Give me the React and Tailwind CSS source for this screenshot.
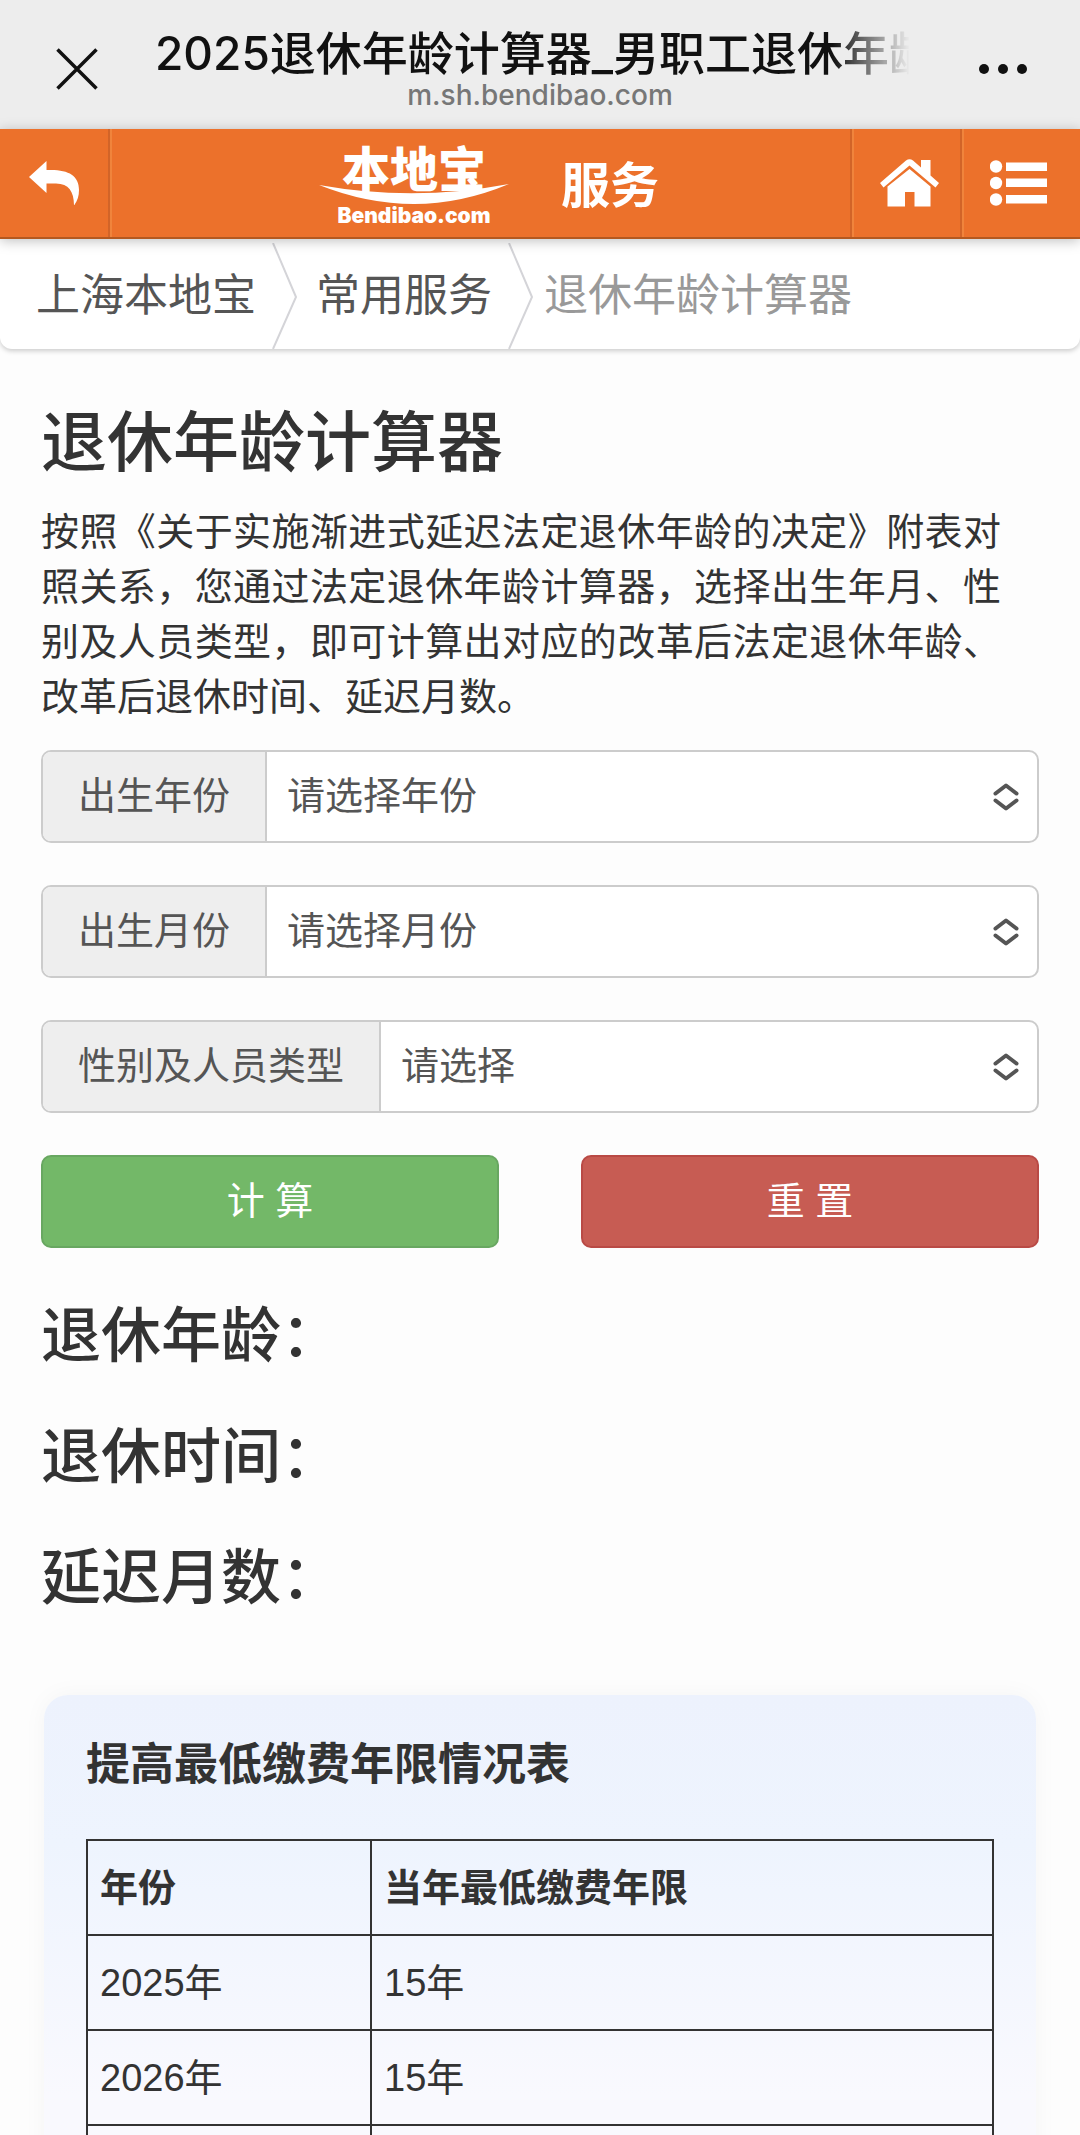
import React, { useState } from 'react';

const years = Array.from({ length: 61 }, (_, i) => 1950 + i);
const months = Array.from({ length: 12 }, (_, i) => i + 1);

const rows = [
  { year: '2025年', limit: '15年' },
  { year: '2026年', limit: '15年' },
  { year: '2027年', limit: '15年' },
];

const BackIcon = () => (
  <svg viewBox="0 0 50 44" className="w-[50px] h-[44px]" fill="currentColor" aria-hidden="true">
    <path d="M0 16 17.500 0V9H22C40 9 50 15 50 29c0 6-1.500 11-5 15.500C45 31 40 22.500 27 22.500h-9.500V32z" />
  </svg>
);

const HomeIcon = () => (
  <svg viewBox="0 0 59 48" className="w-[59px] h-[48px]" fill="currentColor" aria-hidden="true">
    <path d="M0 24 26 1.500q3.500-2.500 7 0l8 7V1h9.500v15.500L59 24l-3.500 4.500-26-22-26 22z" />
    <path d="m29.500 10 21 17.500v20H34.500V33h-9.500v14.500H7.500v-20z" />
  </svg>
);

const ListIcon = () => (
  <svg viewBox="0 0 57 46" className="w-[57px] h-[46px]" fill="currentColor" aria-hidden="true">
    <circle cx="6" cy="6.500" r="6.200" />
    <circle cx="6" cy="23" r="6.200" />
    <circle cx="6" cy="39.500" r="6.200" />
    <path d="M16 2.500h41v8.500H16zM16 18.500h41V27H16zM16 35h41v8.500H16z" />
  </svg>
);

const Sorter = () => (
  <svg
    viewBox="0 0 26 28"
    className="absolute right-[18px] top-1/2 -translate-y-1/2 w-[26px] h-[28px] pointer-events-none"
    fill="none"
    stroke="#555"
    strokeWidth="4"
    strokeLinecap="round"
    strokeLinejoin="round"
    aria-hidden="true"
  >
    <path d="M2.500 10.500 13 2.500l10.500 8M2.500 17.500l10.500 8 10.500-8" />
  </svg>
);

const CrumbArrow = () => (
  <svg viewBox="0 0 26 106" className="w-[26px] h-[106px]" fill="none" stroke="#d4d4d8" strokeWidth="2" aria-hidden="true">
    <path d="M1 0l23 54L1 106" />
  </svg>
);

const Field = ({ id, label, placeholder, value, onChange, children }) => (
  <div className="flex h-[93px] border-2 border-[#ccc] rounded-[10px] overflow-hidden bg-white text-[38px] text-[#555]">
    <label htmlFor={id} className="flex items-center shrink-0 px-[35px] bg-[#eee] border-r-2 border-[#ccc]">
      {label}
    </label>
    <div className="relative flex-1">
      <select
        id={id}
        value={value}
        onChange={(e) => onChange(e.target.value)}
        className="w-full h-full pl-[20px] pr-16 appearance-none bg-transparent outline-none"
      >
        <option value="">{placeholder}</option>
        {children}
      </select>
      <Sorter />
    </div>
  </div>
);

const App = () => {
  const [year, setYear] = useState('');
  const [month, setMonth] = useState('');
  const [type, setType] = useState('');

  const reset = () => {
    setYear('');
    setMonth('');
    setType('');
  };

  return (
    <div className="h-screen flex flex-col bg-[#fdfdfd] text-[#333] font-['Liberation_Sans','Noto_Sans_CJK_SC',sans-serif]">
      {/* WebView title bar */}
      <div className="h-[129px] shrink-0 flex items-center justify-between px-[52px] pt-[9px] bg-[#ededed] text-[#111] font-['Inter','Noto_Sans_CJK_SC',sans-serif]">
        <button aria-label="关闭" className="w-[50px] flex justify-center">
          <svg viewBox="0 0 42 42" className="w-[42px] h-[42px]" stroke="currentColor" strokeWidth="3.5" aria-hidden="true">
            <path d="M1.500 1.500l39 39M40.500 1.500l-39 39" />
          </svg>
        </button>
        <div className="w-[770px] pb-[4px]">
          <div className="overflow-hidden whitespace-nowrap text-[46px] leading-[56px] font-medium [mask-image:linear-gradient(to_right,#000_88%,transparent_98%)]">
            2025退休年龄计算器_男职工退休年龄
          </div>
          <div className="text-center text-[28px] leading-[28px] font-medium text-[#777]">m.sh.bendibao.com</div>
        </div>
        <button aria-label="更多" className="w-[50px] flex justify-center">
          <svg viewBox="0 0 50 12" className="w-[50px] h-[12px]" fill="currentColor" aria-hidden="true">
            <circle cx="6" cy="6" r="5" />
            <circle cx="25" cy="6" r="5" />
            <circle cx="44" cy="6" r="5" />
          </svg>
        </button>
      </div>

      {/* Site header */}
      <header className="relative z-10 h-[110px] shrink-0 flex bg-[#ec712b] text-white border-b-2 border-[#b4581f] shadow-[0_2px_12px_rgba(0,0,0,0.25)]">
        <button aria-label="返回" className="w-[110px] flex items-center justify-center border-r-2 border-[#d26428]">
          <BackIcon />
        </button>
        <div className="flex-1 flex items-center justify-center gap-[52px] pt-[6px] pl-[16px] border-l-2 border-[#f0843c]">
          <a href="#" className="w-[190px] flex flex-col items-center">
            <span className="text-[48px] leading-[44px] font-black font-['Noto_Sans_CJK_SC',sans-serif]">本地宝</span>
            <svg viewBox="0 0 190 20" className="w-full h-[20px] -mt-1" fill="currentColor" aria-hidden="true">
              <path d="M0 1Q95 18 190 0Q142 20 95 20Q48 20 0 1z" />
            </svg>
            <span className="text-[21px] leading-[24px] font-black font-['Inter',sans-serif]">Bendibao.com</span>
          </a>
          <span className="text-[49px] leading-[60px] font-bold">服务</span>
        </div>
        <a href="#" aria-label="首页" className="w-[110px] pl-[6px] flex items-center justify-center border-l-2 border-[#d26428] shadow-[inset_2px_0_0_#f0843c]">
          <HomeIcon />
        </a>
        <button aria-label="菜单" className="w-[120px] pr-[6px] flex items-center justify-center border-l-2 border-[#d26428] shadow-[inset_2px_0_0_#f0843c]">
          <ListIcon />
        </button>
      </header>

      <div className="flex-1 overflow-y-auto [scrollbar-width:none]">
        <nav className="h-[110px] flex items-center pt-[4px] pl-[36px] bg-white rounded-b-[12px] shadow-[0_2px_5px_rgba(0,0,0,0.2)] text-[44px] leading-[60px] whitespace-nowrap text-[#555]">
          <a href="#" className="pr-[16px]">上海本地宝</a>
          <CrumbArrow />
          <a href="#" className="pl-[18px] pr-[16px]">常用服务</a>
          <CrumbArrow />
          <span className="pl-[10px] text-[#999]">退休年龄计算器</span>
        </nav>

        <main className="px-[41px]">
          <h1 className="mt-[54px] text-[66px] leading-[80px] font-medium">退休年龄计算器</h1>
          <p className="mt-[22px] pr-[38px] text-[38px] leading-[55px] text-justify">
            按照《关于实施渐进式延迟法定退休年龄的决定》附表对照关系，您通过法定退休年龄计算器，选择出生年月、性别及人员类型，即可计算出对应的改革后法定退休年龄、改革后退休时间、延迟月数。
          </p>

          <form className="mt-[25px] flex flex-col gap-[42px]" onSubmit={(e) => e.preventDefault()}>
            <Field id="year" label="出生年份" placeholder="请选择年份" value={year} onChange={setYear}>
              {years.map((y) => (
                <option key={y} value={y}>{y}年</option>
              ))}
            </Field>
            <Field id="month" label="出生月份" placeholder="请选择月份" value={month} onChange={setMonth}>
              {months.map((m) => (
                <option key={m} value={m}>{m}月</option>
              ))}
            </Field>
            <Field id="type" label="性别及人员类型" placeholder="请选择" value={type} onChange={setType}>
              <option value="male">男职工</option>
              <option value="female55">原法定退休年龄55周岁女职工</option>
              <option value="female50">原法定退休年龄50周岁女职工</option>
            </Field>

            <div className="grid grid-cols-2 gap-[82px] text-[38px] text-white">
              <button type="submit" className="h-[93px] rounded-[10px] bg-[#73b868] border-2 border-[#68a761]">计 算</button>
              <button type="button" onClick={reset} className="h-[93px] rounded-[10px] bg-[#c75c53] border-2 border-[#b94a45]">重 置</button>
            </div>
          </form>

          <div className="mt-[28px] text-[60px] leading-[121px] font-medium">
            <p>退休年龄：</p>
            <p>退休时间：</p>
            <p>延迟月数：</p>
          </div>

          <section className="mt-[56px] mx-[3px] px-[42px] pt-[44px] pb-[42px] rounded-[24px] bg-[linear-gradient(to_bottom,#edf2fd_0px,#eef4fe_150px,#f9f9fe_400px)] shadow-[0_0_24px_rgba(0,0,0,0.04)]">
            <h2 className="text-[44px] leading-[52px] font-bold">提高最低缴费年限情况表</h2>
            <table className="mt-[48px] w-full table-fixed border-collapse text-left text-[38px] leading-[56px]">
              <thead>
                <tr className="h-[95px]">
                  <th className="w-[284px] px-[12px] border-2 border-[#333] font-bold">年份</th>
                  <th className="px-[12px] border-2 border-[#333] font-bold">当年最低缴费年限</th>
                </tr>
              </thead>
              <tbody>
                {rows.map((row) => (
                  <tr key={row.year} className="h-[95px]">
                    <td className="px-[12px] border-2 border-[#333]">{row.year}</td>
                    <td className="px-[12px] border-2 border-[#333]">{row.limit}</td>
                  </tr>
                ))}
              </tbody>
            </table>
          </section>
        </main>
      </div>
    </div>
  );
};

export default App;
